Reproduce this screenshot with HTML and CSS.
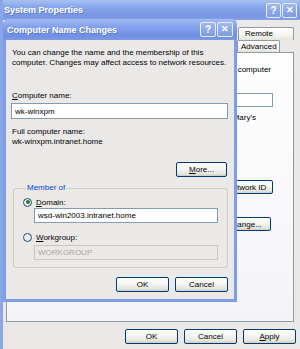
FILE: index.html
```html
<!DOCTYPE html>
<html lang="en">
<head>
  <title>System Properties</title>
  <link rel="stylesheet" href="styles.css">
</head>
<body>
  <div class="window outer">
    <div class="titlebar">
      <span class="title">System Properties</span>
      <div class="controls">
        <span class="cbtn">?</span>
        <span class="cbtn close">&#x2715;</span>
      </div>
    </div>
    <div class="client">
      <div class="tabs">
        <div class="tab-row">
          <span class="tab">Remote</span>
        </div>
        <div class="tab-row second">
          <span class="tab">Advanced</span>
        </div>
      </div>
      <div class="panel">
        <p class="line first">computer</p>
        <input class="field desc" type="text">
        <p class="line mary">"Mary's</p>
        <button class="btn wide netid">Network ID</button>
        <button class="btn wide change">Change...</button>
      </div>
      <div class="actions">
        <button class="btn">OK</button>
        <button class="btn">Cancel</button>
        <button class="btn"><u>A</u>pply</button>
      </div>
    </div>

    <!-- Computer Name Changes dialog on top -->
    <div class="window inner">
      <div class="titlebar">
        <span class="title">Computer Name Changes</span>
        <div class="controls">
          <span class="cbtn">?</span>
          <span class="cbtn close">&#x2715;</span>
        </div>
      </div>
      <div class="body">
        <p class="intro">You can change the name and the membership of this<br>computer. Changes may affect access to network resources.</p>
        <label class="label name-label"><u>C</u>omputer name:</label>
        <input class="field name" type="text" value="wk-winxpm">
        <p class="label full-label">Full computer name:</p>
        <p class="label">wk-winxpm.intranet.home</p>
        <div class="row more-row">
          <button class="btn"><u>M</u>ore...</button>
        </div>
        <fieldset class="group">
          <legend>Member of</legend>
          <div class="radio-row">
            <span class="radio checked"></span>
            <span><u>D</u>omain:</span>
          </div>
          <input class="field member" type="text" value="wsd-win2003.intranet.home">
          <div class="radio-row wg">
            <span class="radio"></span>
            <span><u>W</u>orkgroup:</span>
          </div>
          <input class="field member disabled" type="text" value="WORKGROUP" disabled>
        </fieldset>
        <div class="row ok-row">
          <button class="btn">OK</button>
          <button class="btn">Cancel</button>
        </div>
      </div>
    </div>
  </div>
</body>
</html>
```

FILE: styles.css
```css
body {
  margin: 0;
  font-family: "Liberation Sans", Arial, sans-serif;
  font-size: 8px;
  background-color: #ebe9e8;
}

p {
  margin: 0;
}

.window {
  background-color: #ebe9e8;
}

.outer {
  position: relative;
  width: 300px;
  height: 349px;
  border-left: 3px solid #8aa6e8;
  box-sizing: border-box;
  display: flex;
  flex-direction: column;
}

.titlebar {
  display: flex;
  align-items: center;
  justify-content: space-between;
  height: 20px;
  padding: 0 3px 0 1px;
  background: linear-gradient(#a9c1f2, #88a5ea 35%, #7896e3 80%, #84a1e6);
  color: white;
  flex-shrink: 0;
}

.title {
  font-weight: bold;
  font-size: 9px;
  text-shadow: 1px 1px 0 rgba(40, 60, 140, 0.35);
}

.controls {
  display: flex;
  gap: 1px;
}

.cbtn {
  width: 13px;
  height: 13px;
  border: 1px solid #e8eefc;
  border-radius: 2px;
  background: linear-gradient(#9fb8f0, #7d9be4);
  color: white;
  font-weight: bold;
  font-size: 10px;
  line-height: 13px;
  text-align: center;
}

.cbtn.close {
  font-size: 9px;
}

.client {
  flex: 1;
  display: flex;
  flex-direction: column;
  padding: 0 4px 5px 3px;
}

.tabs {
  padding-top: 7px;
  margin-right: 2px;
}

.tab-row {
  display: flex;
  justify-content: flex-end;
  height: 13px;
}

.tab-row.second {
  height: 12px;
  margin-right: 14px;
}

.tab {
  width: 56px;
  box-sizing: border-box;
  border: 1px solid #919b9c;
  border-bottom: none;
  border-radius: 2px 2px 0 0;
  background: linear-gradient(#ffffff, #f3f3f0 60%, #e4e4de);
  padding-left: 6px;
  line-height: 12px;
}

.tab-row.second .tab {
  width: 43px;
  padding-left: 3px;
}

.panel {
  flex: 1;
  margin-right: 2px;
  border: 1px solid #919b9c;
  background: linear-gradient(#fefefe, #f4f3f7);
  display: flex;
  flex-direction: column;
  align-items: flex-end;
  padding-right: 20px;
}

.line {
  white-space: nowrap;
  line-height: 10px;
}

.line.first {
  margin-top: 12px;
  margin-right: 2px;
}

.field {
  box-sizing: border-box;
  height: 16px;
  margin: 0;
  border: 1px solid #7f9db9;
  background: white;
  font-family: inherit;
  font-size: 8px;
  padding: 0 3px;
  color: black;
}

.field.desc {
  width: 150px;
  height: 14px;
  margin-top: 18px;
}

.line.mary {
  margin-top: 6px;
  margin-right: 17px;
}

.btn {
  box-sizing: border-box;
  width: 53px;
  height: 15px;
  padding: 0;
  border: 1px solid #003c74;
  border-radius: 2px;
  background: linear-gradient(#ffffff, #f4f4f0 50%, #e3e2dc 85%, #cdcac0);
  font-family: inherit;
  font-size: 8px;
  color: black;
}

.btn.wide {
  width: 53px;
  height: 14px;
}

.btn.netid {
  margin-top: 57px;
}

.btn.change {
  margin-top: 23px;
  margin-right: 2px;
}

.actions {
  display: flex;
  justify-content: flex-end;
  gap: 6px;
  margin-top: 7px;
}

/* dialog on top */
.inner {
  position: absolute;
  left: 0;
  top: 19px;
  width: 234px;
  height: 283px;
  box-sizing: border-box;
  border: 3px solid #7f9de6;
  border-top: none;
  border-radius: 6px 6px 0 0;
  display: flex;
  flex-direction: column;
}

.inner .titlebar {
  height: 21px;
  margin: 0 -3px;
  padding: 0 4px 0 4px;
  border-radius: 6px 6px 0 0;
  background: linear-gradient(#a3bcf2, #84a2ec 35%, #6f90e3 80%, #7b9ae6);
}

.inner .cbtn {
  width: 14px;
}

.body {
  padding: 8px 6px 0 6px;
  display: flex;
  flex-direction: column;
}

.intro {
  line-height: 10px;
  white-space: nowrap;
}

.label {
  display: block;
  line-height: 10px;
}

.name-label {
  margin-top: 23px;
}

.field.name {
  margin: 2px 0 0 -1px;
  width: 217px;
}

.full-label {
  margin-top: 8px;
}

.row {
  display: flex;
  justify-content: flex-end;
  gap: 6px;
}

.more-row {
  margin-top: 15px;
  margin-right: 1px;
}

.more-row .btn {
  width: 51px;
}

.group {
  margin: 6px 0 0 1px;
  padding: 0 9px 7px 9px;
  border: 1px solid #d0d0bf;
  border-radius: 3px;
}

.group legend {
  color: #0046d5;
  padding: 0 1px;
  margin-left: 3px;
  line-height: 10px;
}

.radio-row {
  display: flex;
  align-items: center;
  gap: 4px;
  height: 10px;
  margin-top: 4px;
}

.radio-row.wg {
  margin-top: 9px;
}

.radio {
  box-sizing: border-box;
  width: 9px;
  height: 9px;
  border: 1px solid #1c5180;
  border-radius: 50%;
  background: radial-gradient(circle at 40% 40%, #ffffff, #dcdad2);
  display: flex;
  align-items: center;
  justify-content: center;
}

.radio.checked::after {
  content: "";
  width: 4px;
  height: 4px;
  border-radius: 50%;
  background: #217a21;
}

.field.member {
  height: 15px;
  width: 184px;
  margin: 1px 0 0 11px;
}

.field.member.disabled {
  margin-top: 3px;
  background: #ebe9e8;
  border-color: #c9c7ba;
  color: #aca899;
}

.ok-row {
  margin-top: 9px;
}
```
